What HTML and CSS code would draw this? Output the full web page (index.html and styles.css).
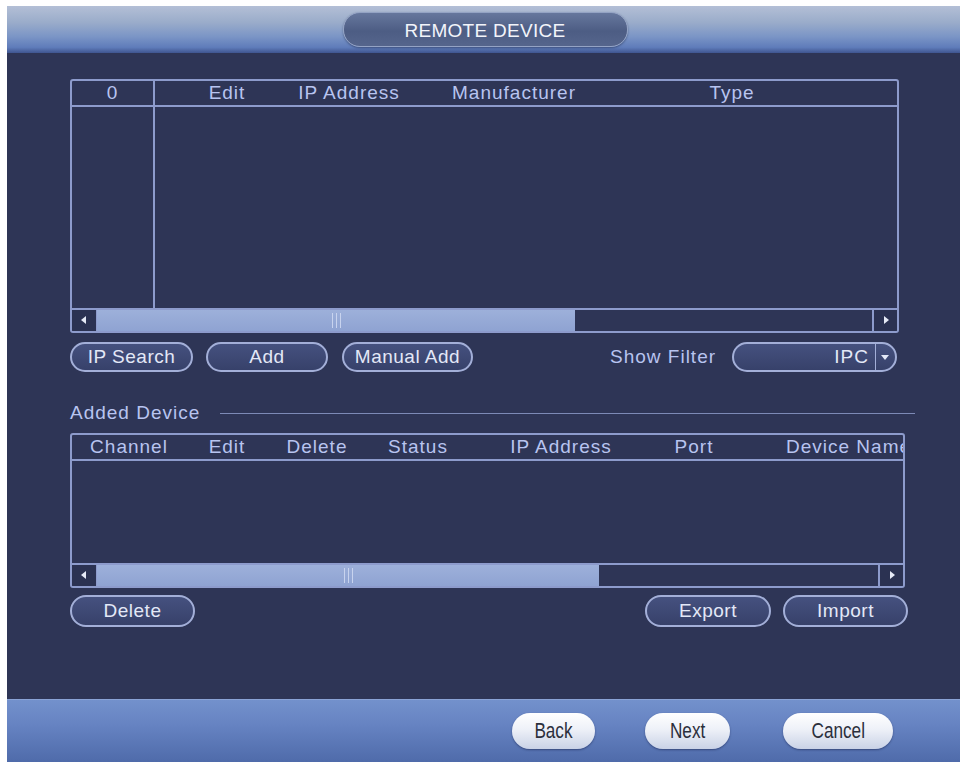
FILE: index.html
```html
<!DOCTYPE html>
<html lang="en">

<head>
    <meta charset="UTF-8">
    <meta name="viewport" content="width=device-width, initial-scale=1.0">
    <title>Remote Device</title>
    <link rel="stylesheet" href="styles.css">
</head>

<body>
    <div class="window">
        <div class="titlebar">
            <div class="title">REMOTE DEVICE</div>
        </div>

        <div class="main">
            <!-- 搜索到的设备 -->
            <div class="grid search-list">
                <div class="grid-head">
                    <div class="cell c-no">0</div>
                    <div class="cell c-edit">Edit</div>
                    <div class="cell c-ip">IP Address</div>
                    <div class="cell c-maker">Manufacturer</div>
                    <div class="cell c-type">Type</div>
                </div>
                <div class="grid-body">
                    <div class="c-no"></div>
                </div>
                <div class="hscroll">
                    <div class="arrow left"></div>
                    <div class="thumb thumb-a"><span class="grip"></span></div>
                    <div class="track"></div>
                    <div class="arrow right"></div>
                </div>
            </div>

            <div class="toolbar">
                <div class="btn b-search">IP Search</div>
                <div class="btn b-add">Add</div>
                <div class="btn b-manual">Manual Add</div>
                <div class="filter-label">Show Filter</div>
                <div class="select">
                    <span class="select-value">IPC</span>
                    <span class="select-arrow"></span>
                </div>
            </div>

            <div class="legend">
                <span>Added Device</span>
                <i class="legend-line"></i>
            </div>

            <!-- 已添加的设备 -->
            <div class="grid added-list">
                <div class="grid-head">
                    <div class="cell a-ch">Channel</div>
                    <div class="cell a-edit">Edit</div>
                    <div class="cell a-del">Delete</div>
                    <div class="cell a-status">Status</div>
                    <div class="cell a-ip">IP Address</div>
                    <div class="cell a-port">Port</div>
                    <div class="cell a-name">Device Name</div>
                </div>
                <div class="grid-body"></div>
                <div class="hscroll">
                    <div class="arrow left"></div>
                    <div class="thumb thumb-b"><span class="grip"></span></div>
                    <div class="track"></div>
                    <div class="arrow right"></div>
                </div>
            </div>

            <div class="actions">
                <div class="btn b-delete">Delete</div>
                <div class="spacer"></div>
                <div class="btn b-export">Export</div>
                <div class="btn b-import">Import</div>
            </div>
        </div>

        <div class="footer">
            <div class="fbtn f-back"><span>Back</span></div>
            <div class="fbtn f-next"><span>Next</span></div>
            <div class="fbtn f-cancel"><span>Cancel</span></div>
        </div>
    </div>
</body>

</html>
```

FILE: styles.css
```css
* {
    margin: 0;
    padding: 0;
    box-sizing: border-box;
}

body {
    background-color: #fff;
    font-family: "Liberation Sans", Arial, sans-serif;
}

.window {
    display: flex;
    flex-direction: column;
    width: 953px;
    height: 756px;
    margin: 6px 0 0 7px;
    background-color: #2e3556;
}

/* 标题栏 */
.titlebar {
    display: flex;
    justify-content: center;
    align-items: center;
    height: 47px;
    padding-left: 3px;
    background: linear-gradient(#b3bfd6 0%, #9aacca 35%, #7b95c6 65%, #5f7cba 88%, #3f5590 100%);
}

.title {
    width: 285px;
    height: 35px;
    line-height: 35px;
    text-align: center;
    color: #f2f4fa;
    font-size: 19px;
    letter-spacing: 0.3px;
    border-radius: 17px;
    border: 1px solid #94a3c4;
    background: linear-gradient(#66779d, #4d5d84 55%, #55658c);
    box-shadow: 0 1px 2px rgba(30, 40, 70, 0.5);
}

.main {
    flex: 1;
    padding: 26px 0 0 63px;
    color: #b8c4f0;
    font-size: 19px;
    letter-spacing: 1px;
}

/* 表格 */
.grid {
    display: flex;
    flex-direction: column;
    border: 2px solid #8d9bcc;
    border-radius: 3px;
    overflow: hidden;
}

.search-list {
    width: 829px;
    height: 254px;
}

.added-list {
    width: 835px;
    height: 155px;
    margin-top: 10px;
}

.grid-head {
    display: flex;
    height: 26px;
    border-bottom: 2px solid #8d9bcc;
    white-space: nowrap;
}

.cell {
    display: flex;
    justify-content: center;
    align-items: center;
    flex-shrink: 0;
}

.grid-body {
    flex: 1;
    display: flex;
}

.c-no {
    width: 83px;
    border-right: 2px solid #8d9bcc;
}

.c-edit {
    width: 144px;
}

.c-ip {
    width: 100px;
}

.c-maker {
    width: 230px;
}

.c-type {
    width: 206px;
}

.a-ch {
    width: 114px;
}

.a-edit {
    width: 82px;
}

.a-del {
    width: 98px;
}

.a-status {
    width: 104px;
}

.a-ip {
    width: 182px;
}

.a-port {
    width: 84px;
}

/* 最后一列超出表格宽度，被边框裁掉 */
.a-name {
    justify-content: flex-start;
    padding-left: 50px;
}

/* 滚动条 */
.hscroll {
    display: flex;
    height: 23px;
    border-top: 2px solid #8d9bcc;
}

.arrow {
    position: relative;
    width: 25px;
    background-color: #2b3252;
}

.arrow.left {
    border-right: 1px solid #8d9bcc;
}

.arrow.right {
    border-left: 2px solid #8d9bcc;
}

.arrow::after {
    content: "";
    position: absolute;
    top: 6px;
    left: 9px;
    border-top: 4px solid transparent;
    border-bottom: 4px solid transparent;
}

.arrow.left::after {
    border-right: 5px solid #e6eaf6;
}

.arrow.right::after {
    left: 10px;
    border-left: 5px solid #e6eaf6;
}

.thumb {
    display: flex;
    justify-content: center;
    align-items: center;
    background: linear-gradient(#9db0da, #8fa3d2);
}

.thumb-a {
    width: 478px;
}

.thumb-b {
    width: 502px;
}

.grip {
    width: 9px;
    height: 15px;
    border-left: 1px solid #c8d3ee;
    border-right: 1px solid #c8d3ee;
    background: linear-gradient(90deg, transparent 3px, #c8d3ee 3px, #c8d3ee 4px, transparent 4px);
}

.track {
    flex: 1;
}

/* 按钮 */
.btn {
    display: flex;
    justify-content: center;
    align-items: center;
    height: 30px;
    color: #e3e8f7;
    border: 2px solid #a3afd8;
    border-radius: 15px;
    background: linear-gradient(#45517f, #37416a);
    white-space: nowrap;
    letter-spacing: 0.5px;
}

.toolbar {
    display: flex;
    align-items: center;
    margin-top: 9px;
    width: 838px;
}

.b-search {
    width: 123px;
}

.b-add {
    width: 122px;
    margin-left: 13px;
}

.b-manual {
    width: 131px;
    margin-left: 14px;
}

.filter-label {
    margin-left: 137px;
    white-space: nowrap;
}

.select {
    display: flex;
    align-items: center;
    width: 165px;
    height: 30px;
    margin-left: 16px;
    border: 2px solid #a3afd8;
    border-radius: 15px;
    background: linear-gradient(#45517f, #37416a);
    color: #e3e8f7;
}

.select-value {
    flex: 1;
    text-align: right;
    padding-right: 6px;
}

.select-arrow {
    position: relative;
    width: 20px;
    height: 100%;
    border-left: 1px solid #a3afd8;
}

.select-arrow::after {
    content: "";
    position: absolute;
    top: 11px;
    left: 5px;
    border-left: 4px solid transparent;
    border-right: 4px solid transparent;
    border-top: 5px solid #e3e8f7;
}

/* 分组标题 */
.legend {
    display: flex;
    align-items: center;
    width: 845px;
    height: 20px;
    margin-top: 31px;
}

.legend span {
    white-space: nowrap;
}

.legend-line {
    flex: 1;
    height: 1px;
    margin-left: 20px;
    background-color: #7d8ab6;
}

.actions {
    display: flex;
    width: 838px;
    margin-top: 7px;
}

.b-delete {
    width: 125px;
    height: 32px;
    border-radius: 16px;
}

.spacer {
    flex: 1;
}

.b-export {
    width: 126px;
    height: 32px;
    border-radius: 16px;
}

.b-import {
    width: 125px;
    height: 32px;
    margin-left: 12px;
    border-radius: 16px;
}

/* 底部 */
.footer {
    display: flex;
    justify-content: flex-end;
    align-items: center;
    height: 63px;
    padding-right: 67px;
    border-top: 1px solid #8aa3d6;
    background: linear-gradient(#7391cc, #6683c2 40%, #4f6baa);
}

.fbtn {
    display: flex;
    justify-content: center;
    align-items: center;
    height: 36px;
    color: #2b2f3c;
    font-size: 22px;
    border-radius: 18px;
    background: linear-gradient(#ffffff, #eef1f8 45%, #c9d2e6);
    box-shadow: 0 1px 2px rgba(20, 30, 70, 0.5);
}

/* 底部按钮字体偏窄 */
.fbtn span {
    display: inline-block;
    transform: scaleX(0.78);
}

.f-back {
    width: 83px;
}

.f-next {
    width: 85px;
    margin-left: 50px;
}

.f-cancel {
    width: 110px;
    margin-left: 53px;
}
```
